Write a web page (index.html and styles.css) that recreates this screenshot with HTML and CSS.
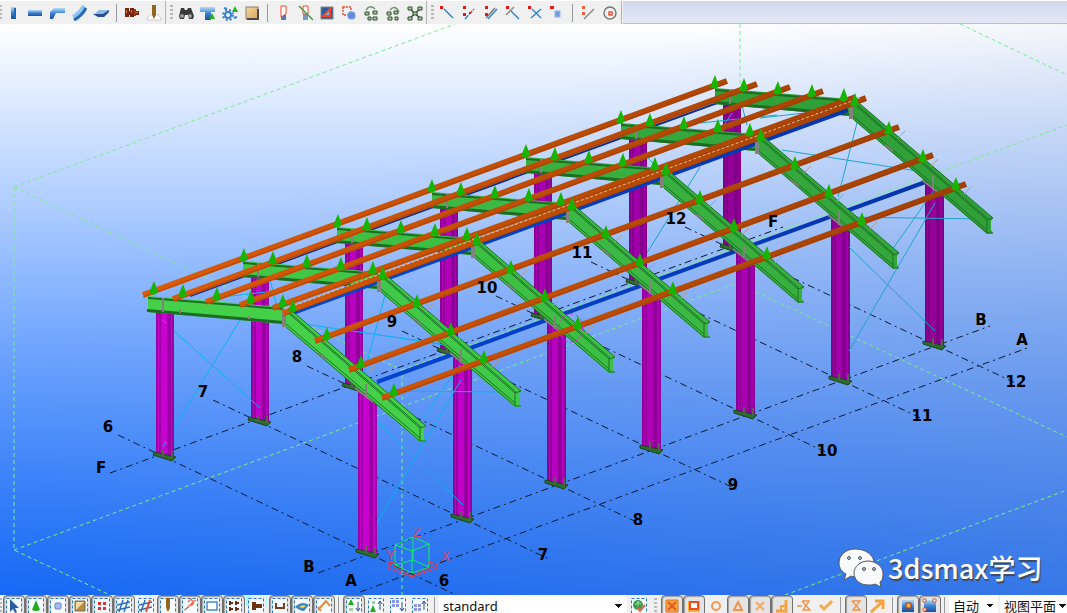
FILE: index.html
```html
<!DOCTYPE html>
<html lang="zh-CN">
<head>
    <meta charset="UTF-8">
    <meta name="viewport" content="width=device-width, initial-scale=1">
    <title>Model View</title>
    <link rel="stylesheet" href="styles.css">
</head>
<body>
    <!-- shared icon parts -->
    <svg class="defs" aria-hidden="true">
        <defs>
            <linearGradient id="blue" x1="0" y1="0" x2="0" y2="1">
                <stop offset="0" stop-color="#b4dcf8"/>
                <stop offset="0.5" stop-color="#3c82d2"/>
                <stop offset="1" stop-color="#1c4f9c"/>
            </linearGradient>
            <linearGradient id="gold" x1="0" y1="0" x2="1" y2="1">
                <stop offset="0" stop-color="#f4d898"/>
                <stop offset="1" stop-color="#d8a860"/>
            </linearGradient>
            <rect id="marquee" x="0.5" y="0.5" width="15" height="15" fill="#f6fbff" stroke="#2a78c0" stroke-dasharray="3 2"/>
        </defs>
    </svg>

    <header class="toolbar">
        <div class="group">
            <span class="handle"></span>
            <button type="button" class="tool" aria-label="Column"><svg viewBox="0 0 16 16"><path d="M6 2h5v12H6z" fill="url(#blue)"/><path d="M9 3h2v11H9z" fill="#1f66b8"/></svg></button>
            <button type="button" class="tool" aria-label="Beam"><svg viewBox="0 0 16 16"><path d="M1 5h14v6H1z" fill="url(#blue)"/></svg></button>
            <button type="button" class="tool" aria-label="Polybeam"><svg viewBox="0 0 16 16"><path d="M1 14V7l4-4h11v5H7l-3 6z" fill="url(#blue)"/></svg></button>
            <button type="button" class="tool" aria-label="Curved beam"><svg viewBox="0 0 16 16"><path d="M2 12Q8 9 13 1" fill="none" stroke="#8fc4ee" stroke-width="4"/><path d="M3 15Q11 11 15 3" fill="none" stroke="#2468b8" stroke-width="3"/></svg></button>
            <button type="button" class="tool" aria-label="Plate"><svg viewBox="0 0 16 16"><path d="M6 5h10l-5 5H0z" fill="#8fbae4"/><path d="M0 9h10l6-4v2l-5 5H5z" fill="#264c94"/></svg></button>
            <span class="sep"></span>
            <button type="button" class="tool" aria-label="Bolts"><svg viewBox="0 0 16 16"><path d="M1 3h4v9H1zM6 3h4v9H6zM4 6h11v4H4z" fill="#7c2410"/><path d="M10 4h2v7h-2z" fill="#9c3c14"/><path d="M2 5h1v3H2zM7 5h1v3H7zM12 7h2v1h-2z" fill="#d47840"/></svg></button>
            <button type="button" class="tool" aria-label="Weld"><svg viewBox="0 0 16 16"><path d="M1 15a7 6 0 0 1 14 0z" fill="#fff" stroke="#ccc"/><path d="M6 0h4v10l-2 4-2-4z" fill="#94661c"/></svg></button>
        </div>
        <div class="group">
            <span class="handle"></span>
            <button type="button" class="tool" aria-label="Find"><svg viewBox="0 0 16 16"><path d="M3 3h3l1 2h2l1-2h3l3 8-1 3h-4l-1-4H7l-1 4H2l-1-3z" fill="#3a3a3a"/><circle cx="4" cy="11" r="2" fill="#999"/><circle cx="12" cy="11" r="2" fill="#999"/></svg></button>
            <button type="button" class="tool" aria-label="Component"><svg viewBox="0 0 16 16"><path d="M0 2h15v5h-4v8H5V7H0z" fill="url(#blue)"/><path d="M12 8l3 6H9z" fill="#1fb41f"/></svg></button>
            <button type="button" class="tool" aria-label="Component settings"><svg viewBox="0 0 16 16"><circle cx="6" cy="10" r="3" fill="none" stroke="#3c82c8" stroke-width="2"/><circle cx="6" cy="10" r="5" fill="none" stroke="#3c82c8" stroke-width="2" stroke-dasharray="2 2"/><path d="M13 1l3 6h-6z" fill="#1fb41f"/><path d="M2 3l3 1M12 13l3-1" stroke="#3c82c8" stroke-width="2"/></svg></button>
            <button type="button" class="tool" aria-label="Macro"><svg viewBox="0 0 16 16"><rect x="2" y="2" width="12" height="12" fill="url(#gold)" stroke="#8a8070"/><path d="M3 14h11V4" fill="none" stroke="#4a4a4a" stroke-width="2"/></svg></button>
            <span class="sep"></span>
            <button type="button" class="tool" aria-label="Fit part end"><svg viewBox="0 0 16 16"><path d="M6 9h5v6H6z" fill="#4c7cc0"/><path d="M6 1h5v8l-5 3z" fill="#fff" stroke="#f04828"/></svg></button>
            <button type="button" class="tool" aria-label="Cut part with line"><svg viewBox="0 0 16 16"><path d="M6 8h5v7H6z" fill="#7898c8"/><path d="M6 1h5v8H6z" fill="#fff" stroke="#f04828"/><path d="M2 1l14 14" stroke="#3c9c3c" stroke-width="1.4"/></svg></button>
            <button type="button" class="tool" aria-label="Cut part with polygon"><svg viewBox="0 0 16 16"><rect x="2" y="2" width="12" height="12" fill="#2a5c9c" stroke="#888"/><path d="M4 11l7-7v7z" fill="#88aee0" stroke="#f04828" stroke-width="2"/></svg></button>
            <button type="button" class="tool" aria-label="Cut part with part"><svg viewBox="0 0 16 16"><rect x="2" y="2" width="8" height="8" fill="none" stroke="#f04828" stroke-width="1.4" stroke-dasharray="2 1"/><rect x="7" y="7" width="7" height="7" rx="2" fill="#5c8cd8" stroke="#8ca8e8"/></svg></button>
            <button type="button" class="tool" aria-label="Auto connection"><svg viewBox="0 0 16 16"><path d="M3 5q4-6 9-1" fill="none" stroke="#6c946c" stroke-width="1.4"/><path d="M2 7h4v3H2zM10 6h4v3h-4zM5 12h3v3H5zM10 12h4v3h-4z" fill="#a8cca0" stroke="#344c34"/></svg></button>
            <button type="button" class="tool" aria-label="Auto default"><svg viewBox="0 0 16 16"><path d="M5 5q5-6 9 2" fill="none" stroke="#6c946c" stroke-width="1.4"/><path d="M2 7h4v3H2zM9 6h4v3H9zM3 12h4v3H3zM10 12h3v3h-3z" fill="#a8cca0" stroke="#344c34"/></svg></button>
            <button type="button" class="tool" aria-label="Explode"><svg viewBox="0 0 16 16"><path d="M3 4l10 9M13 4L3 13" stroke="#344c34" stroke-width="1.4"/><path d="M1 2h4v3H1zM11 2h4v3h-4zM1 12h4v3H1zM11 12h4v3h-4zM6 7h4v3H6z" fill="#a8cca0" stroke="#344c34"/></svg></button>
        </div>
        <div class="group">
            <span class="handle"></span>
            <button type="button" class="tool points" aria-label="Point on line"><svg viewBox="0 0 16 16"><path d="M5 4l9 9" stroke="#2c84d0"/><path d="M1 1h3v3H1z" fill="#e41818"/></svg></button>
            <button type="button" class="tool points" aria-label="Points along two points"><svg viewBox="0 0 16 16"><path d="M4 14l9-10" stroke="#2c84d0" stroke-dasharray="5 1"/><path d="M2 1h3v3H2zM2 8h3v3H2zM8 7h2v2H8z" fill="#e41818"/></svg></button>
            <button type="button" class="tool points" aria-label="Parallel points"><svg viewBox="0 0 16 16"><path d="M3 13L12 3" stroke="#777"/><path d="M5 14l9-10" stroke="#2c84d0"/><path d="M2 1h3v3H2zM2 8h3v3H2z" fill="#e41818"/></svg></button>
            <button type="button" class="tool points" aria-label="Intersection point"><svg viewBox="0 0 16 16"><path d="M6 6l8 8" stroke="#2c84d0"/><path d="M1 10L9 2" stroke="#888"/><path d="M1 1h3v3H1z" fill="#e41818"/></svg></button>
            <button type="button" class="tool points" aria-label="Line crossing"><svg viewBox="0 0 16 16"><path d="M5 4l9 9M14 4L4 13" stroke="#2c84d0"/><path d="M1 1h3v3H1z" fill="#e41818"/></svg></button>
            <button type="button" class="tool" aria-label="Point on part"><svg viewBox="0 0 16 16"><rect x="6" y="6" width="5" height="6" fill="#6c9ce4" stroke="#9cb4ec"/><path d="M1 1h4v3H1z" fill="#e41818"/></svg></button>
            <span class="sep"></span>
            <button type="button" class="tool points" aria-label="Construction line"><svg viewBox="0 0 16 16"><path d="M4 14L14 4" stroke="#888"/><path d="M2 1h3v3H2zM2 7h3v3H2z" fill="#f45c3c"/></svg></button>
            <button type="button" class="tool points" aria-label="Construction circle"><svg viewBox="0 0 16 16"><circle cx="8" cy="8" r="6" fill="none" stroke="#777"/><rect x="7" y="7" width="3" height="3" fill="none" stroke="#f04828"/></svg></button>
        </div>
        <div class="rest"></div>
    </header>

    <main class="view">
        <svg class="scene" viewBox="0 24 1067 571" preserveAspectRatio="xMidYMid slice" role="img" aria-label="Steel frame model">
            <defs>
                <linearGradient id="sky" x1="0" y1="0" x2="0" y2="1">
                    <stop offset="0" stop-color="#ffffff"/>
                    <stop offset="1" stop-color="#0060ff"/>
                </linearGradient>
                <linearGradient id="haze" x1="0.4" y1="0.2" x2="1" y2="1">
                    <stop offset="0" stop-color="#8898c0" stop-opacity="0"/>
                    <stop offset="1" stop-color="#8898c0" stop-opacity="0.4"/>
                </linearGradient>
                <linearGradient id="rust" gradientUnits="userSpaceOnUse" x1="145" y1="300" x2="960" y2="120">
                    <stop offset="0" stop-color="#dc5a04"/>
                    <stop offset="1" stop-color="#a04004"/>
                </linearGradient>
                <linearGradient id="tube" gradientUnits="userSpaceOnUse" x1="190" y1="300" x2="930" y2="100">
                    <stop offset="0" stop-color="#0448dc"/>
                    <stop offset="1" stop-color="#0434a8"/>
                </linearGradient>

                <g id="colF">
                    <path class="steel" d="M156 302h18v156l-8 1-10-3z"/>
                    <path class="edge" d="M157 302v154M160 302v155M168 302v156M170 302v156M173 302v156"/>
                    <path class="base" d="M154 452l22 5-4 4-19-6z"/>
                    <path class="bolt" d="M163 450v7M172 451v7"/>
                </g>
                <g id="colB">
                    <path class="steel" d="M358 384l19 12v157l-8 2-11-4z"/>
                    <path class="edge" d="M359 386v164M362 388v163M370 392v161M372 393v160M376 395v157"/>
                    <path class="base" d="M356 549l23 5-4 4-19-6z"/>
                    <path class="bolt" d="M366 546v7M375 547v7"/>
                </g>
                <g id="rafterF">
                    <path class="green" d="M148 296l135 11v17l-135-12z"/>
                    <path class="flange" d="M148 297l135 11v2l-135-11zM147 309l136 12v3l-136-12z"/>
                    <path class="plate" d="M163 298v14M180 309v4M249 316v3"/>
                </g>
                <g id="rafterB">
                    <path class="green" d="M286 311h6l134 115-2 3v9l2 3-6 1-134-115z"/>
                    <path class="line" d="M286 311l134 117v13M292 311l134 115-6 2M289 312l132 115M286 324l134 114M286 327l134 114 6 0"/>
                    <path class="plate" d="M283 309v18M285 310v17M318 353l8 6M366 384v14M355 388l18 14"/>
                </g>
                <path id="cone" class="cone" d="M0-7l4 11-4 3-5-2z"/>
                <g id="conesF">
                    <use href="#cone" x="149" y="290"/>
                    <use href="#cone" x="178" y="293"/>
                    <use href="#cone" x="212" y="296"/>
                    <use href="#cone" x="246" y="299"/>
                    <use href="#cone" x="278" y="303"/>
                </g>
                <g id="conesB">
                    <use href="#cone" x="288" y="308"/>
                    <use href="#cone" x="322" y="336"/>
                    <use href="#cone" x="356" y="364"/>
                    <use href="#cone" x="389" y="392"/>
                    <path class="clip" d="M331 346l7-7M364 374l7-7M397 402l7-7"/>
                </g>
            </defs>

            <rect class="sky" x="0" y="24" width="1067" height="571"/>
            <rect class="haze" x="0" y="24" width="1067" height="571"/>

            <!-- work area box -->
            <path class="workarea" d="M14 187L455 24M14 187V550L110 595M14 187L402 370V595M402 370L1067 125M14 550L737 283L1067 437M740 24V283M960 24L1067 75M785 595L1067 490"/>

            <!-- grid lines -->
            <path class="grid" d="M110 473L783 227M318 573L990 326M360 592L1030 347"/>
            <path class="grid" d="M118 435L456 595M213 400L551 560M307 366L645 526M402 331L740 491M496 296L834 456M591 262L929 422M685 227L1024 387"/>

            <!-- columns, far to near -->
            <g class="f12"><use href="#colF" x="567" y="-208"/><use href="#colB" x="567" y="-208"/></g>
            <g class="f11"><use href="#colF" x="473" y="-173"/><use href="#colB" x="473" y="-173"/></g>
            <g class="f10"><use href="#colF" x="378" y="-139"/><use href="#colB" x="378" y="-139"/></g>
            <g class="f9"><use href="#colF" x="284" y="-104"/><use href="#colB" x="284" y="-104"/></g>
            <g class="f8"><use href="#colF" x="189" y="-69"/><use href="#colB" x="189" y="-69"/></g>
            <g class="f7"><use href="#colF" x="95" y="-35"/><use href="#colB" x="95" y="-35"/></g>
            <g class="f6"><use href="#colF"/><use href="#colB"/></g>

            <!-- bracing -->
            <path class="brace" d="M174 331L260 408M240 320L174 428M163 320l3 3M163 447l3-6M377 421L463 505M461 380L377 523M460 365L423 418M370 391L515 392M297 323L448 345M387 288L363 377M223 297L283 290M268 272L277 307M400 338L457 347"/>
            <path class="brace far" d="M782 150L930 173M859 115L838 197M838 217L985 219M940 182L887 257M935 203L849 351M849 247L935 331M700 123L777 115M700 167L647 253M740 98L747 125M648 158l12 12M732 113l-8 12M760 118L840 109"/>

            <path class="tube thin" d="M190 296L728 99"/>

            <g class="f12"><use href="#rafterF" x="567" y="-208"/></g>
            <g class="f11"><use href="#rafterF" x="473" y="-173"/></g>
            <g class="f10"><use href="#rafterF" x="378" y="-139"/></g>
            <g class="f9"><use href="#rafterF" x="284" y="-104"/></g>
            <g class="f8"><use href="#rafterF" x="189" y="-69"/></g>
            <g class="f7"><use href="#rafterF" x="95" y="-35"/></g>
            <g class="f6"><use href="#rafterF"/></g>

            <path class="tube" d="M290 314L848 110M377 382L931 180"/>

            <g class="f12"><use href="#rafterB" x="567" y="-208"/></g>
            <g class="f11"><use href="#rafterB" x="473" y="-173"/></g>
            <g class="f10"><use href="#rafterB" x="378" y="-139"/></g>
            <g class="f9"><use href="#rafterB" x="284" y="-104"/></g>
            <g class="f8"><use href="#rafterB" x="189" y="-69"/></g>
            <g class="f7"><use href="#rafterB" x="95" y="-35"/></g>
            <g class="f6"><use href="#rafterB"/></g>

            <!-- purlins -->
            <path class="purlin" d="M143 295L727 81M173 299L757 84M206 302L790 87M240 305L823 91M273 308L856 97M283 313L866 98M315 341L899 127M349 370L933 155M382 398L966 184"/>
            <path class="groove" d="M143 297L727 83M173 301L757 86M206 304L790 89M240 307L823 93M273 310L856 99M283 316L866 101M315 343L899 129M349 372L933 157M382 400L966 186"/>
            <path class="ridge" d="M285 309L860 98"/>

            <use href="#conesF" x="566" y="-208"/><use href="#conesB" x="567" y="-208"/>
            <use href="#conesF" x="472" y="-173"/><use href="#conesB" x="473" y="-173"/>
            <use href="#conesF" x="377" y="-139"/><use href="#conesB" x="378" y="-139"/>
            <use href="#conesF" x="283" y="-104"/><use href="#conesB" x="284" y="-104"/>
            <use href="#conesF" x="189" y="-69"/><use href="#conesB" x="189" y="-69"/>
            <use href="#conesF" x="95" y="-35"/><use href="#conesB" x="95" y="-35"/>
            <use href="#conesF" x="5" y="-2"/><use href="#conesB" x="5" y="-2"/>

            <ellipse class="pick" cx="571" cy="328" rx="12" ry="14"/>

            <!-- grid labels -->
            <g class="labels">
                <text x="108" y="432">6</text>
                <text x="203" y="397">7</text>
                <text x="297" y="362">8</text>
                <text x="392" y="327">9</text>
                <text x="487" y="293">10</text>
                <text x="582" y="258">11</text>
                <text x="676" y="224">12</text>
                <text x="444" y="586">6</text>
                <text x="543" y="560">7</text>
                <text x="638" y="525">8</text>
                <text x="733" y="490">9</text>
                <text x="827" y="456">10</text>
                <text x="922" y="421">11</text>
                <text x="1016" y="387">12</text>
                <text x="101" y="473">F</text>
                <text x="773" y="227">F</text>
                <text x="309" y="572">B</text>
                <text x="981" y="325">B</text>
                <text x="351" y="586">A</text>
                <text x="1022" y="345">A</text>
            </g>

            <!-- coordinate cube -->
            <path class="cube" d="M395 545L413 537L429 544L412 551zM395 545V565L413 560L429 567L412 573L395 565M412 551V573M429 544V567M413 537V560"/>
            <path class="axes" d="M388 563L412 576L437 564M388 563v5l24 9 25-9v-5M388 563l7-1M437 564l-9-2"/>
            <g class="axis-labels">
                <text x="417" y="537">Z</text>
                <text x="391" y="560">Y</text>
                <text x="446" y="561">X</text>
            </g>

            <!-- channel mark -->
            <g class="chat">
                <path d="M855 549c-9 0-16 6-16 14 0 5 3 9 7 11l-2 6 7-4c2 1 5 1 8 1 9 0 15-6 15-14s-8-14-19-14z"/>
                <path d="M868 561c-8 0-14 6-14 12 0 7 6 12 14 12 3 0 5 0 7-1l6 3-1-5c3-2 3-5 3-9 0-6-7-12-15-12z"/>
                <g class="eyes">
                    <circle cx="849" cy="558" r="1.5"/><circle cx="860" cy="558" r="1.5"/>
                    <circle cx="864" cy="569" r="1.5"/><circle cx="874" cy="569" r="1.5"/>
                </g>
            </g>
            <text class="channel" x="888" y="579">3dsmax学习</text>
        </svg>
    </main>

    <footer class="statusbar">
        <div class="group">
            <span class="handle small"></span>
            <button type="button" class="tool on" aria-label="Select all"><svg viewBox="0 0 16 16"><use href="#marquee"/><path d="M4 1l9 9H9l2 4-2 1-2-4-3 3z" fill="#2c5ca4"/></svg></button>
            <button type="button" class="tool on" aria-label="Select components"><svg viewBox="0 0 16 16"><use href="#marquee"/><path d="M8 2l4 10q-4 2-8 0z" fill="#1fac1f"/></svg></button>
            <button type="button" class="tool on" aria-label="Select parts"><svg viewBox="0 0 16 16"><use href="#marquee"/><rect x="5" y="5" width="6" height="6" rx="1" fill="#a4bcf0" stroke="#6484cc"/></svg></button>
            <button type="button" class="tool on" aria-label="Select surfaces"><svg viewBox="0 0 16 16"><use href="#marquee"/><path d="M3 3h10v10H3z" fill="#b88c3c" stroke="#786c50"/><path d="M4 12V4h8z" fill="#f4dca0"/></svg></button>
            <button type="button" class="tool on" aria-label="Select points"><svg viewBox="0 0 16 16"><use href="#marquee"/><path d="M4 4h3v3H4zM9 4h3v3H9zM4 9h3v3H4zM9 9h3v3H9z" fill="#e43030"/></svg></button>
            <button type="button" class="tool on" aria-label="Select grids"><svg viewBox="0 0 16 16"><use href="#marquee"/><path d="M3 14L7 2M8 14l4-12M1 7l13-3M1 12l13-3" stroke="#2c6cb4" stroke-width="1.4"/></svg></button>
            <button type="button" class="tool" aria-label="Select grid lines"><svg viewBox="0 0 16 16"><use href="#marquee"/><path d="M3 14L7 2M1 7l13-3M1 12l13-3" stroke="#2c6cb4" stroke-width="1.4"/><path d="M8 14l4-12" stroke="#f04828" stroke-width="2"/></svg></button>
            <button type="button" class="tool on" aria-label="Select welds"><svg viewBox="0 0 16 16"><use href="#marquee"/><path d="M6 0h4v10l-2 4-2-4z" fill="#94661c"/></svg></button>
            <button type="button" class="tool on" aria-label="Select cuts"><svg viewBox="0 0 16 16"><use href="#marquee"/><path d="M3 12L12 3M6 4l3-3 2 3 3-2M9 8l3-3" fill="none" stroke="#f0704c" stroke-width="1.4"/><path d="M2 12l5-3" stroke="#888"/></svg></button>
            <button type="button" class="tool on" aria-label="Select views"><svg viewBox="0 0 16 16"><use href="#marquee"/><rect x="3" y="4" width="10" height="8" fill="#fff" stroke="#3c82c8" stroke-width="1.4"/></svg></button>
            <button type="button" class="tool on" aria-label="Select bolt groups"><svg viewBox="0 0 16 16"><use href="#marquee"/><path d="M3 3h2v4H3zM5 4h2v2H5zM9 3h2v4H9zM11 4h2v2h-2zM3 9h2v4H3zM5 10h2v2H5zM9 9h2v4H9zM11 10h2v2h-2z" fill="#6c2c14"/></svg></button>
            <button type="button" class="tool glow" aria-label="Select single bolts"><svg viewBox="0 0 16 16"><use href="#marquee"/><path d="M4 4h4v8H4zM8 6h6v4H8z" fill="#6c3410"/></svg></button>
            <span class="gap"></span>
            <button type="button" class="tool on" aria-label="Select rebars"><svg viewBox="0 0 16 16"><use href="#marquee"/><path d="M4 5v5h8V5" fill="none" stroke="#7c3c1c" stroke-width="2"/></svg></button>
            <button type="button" class="tool on" aria-label="Select surface treatment"><svg viewBox="0 0 16 16"><use href="#marquee"/><path d="M1 9q7-7 14-2l-5 6q-4 0-9-4z" fill="#3c84c4"/><path d="M5 9q4-3 7-1l-3 2z" fill="#f0dc50"/></svg></button>
            <button type="button" class="tool on" aria-label="Select distances"><svg viewBox="0 0 16 16"><use href="#marquee"/><path d="M2 12L10 3l4 5M2 9l3 4" fill="none" stroke="#e88a34" stroke-width="2"/></svg></button>
            <span class="sep"></span>
            <button type="button" class="tool on" aria-label="Components down"><svg viewBox="0 0 16 16"><use href="#marquee"/><path d="M5 1l3 6H2z" fill="#1fac1f"/><path d="M3 10h4v3H3z" fill="#a8cca0"/><path d="M12 4v9M10 10l2 3 2-3" fill="none" stroke="#304c84"/></svg></button>
            <button type="button" class="tool" aria-label="Components up"><svg viewBox="0 0 16 16"><use href="#marquee"/><path d="M5 7l3 7H2z" fill="#1fac1f"/><path d="M4 3h3v3H4z" fill="#a8cca0"/><path d="M12 3v9M10 6l2-3 2 3" fill="none" stroke="#304c84"/></svg></button>
            <button type="button" class="tool" aria-label="Assemblies down"><svg viewBox="0 0 16 16"><use href="#marquee"/><path d="M2 2h3v3H2zM6 2h3v3H6zM2 6h3v3H2zM6 6h3v3H6z" fill="#8c98e4"/><path d="M12 4v9M10 10l2 3 2-3" fill="none" stroke="#304c84"/></svg></button>
            <button type="button" class="tool" aria-label="Assemblies up"><svg viewBox="0 0 16 16"><use href="#marquee"/><path d="M2 6h3v3H2zM6 6h3v3H6zM2 10h3v3H2zM6 10h3v3H6z" fill="#8c98e4"/><path d="M12 3v9M10 6l2-3 2 3" fill="none" stroke="#304c84"/></svg></button>
            <span class="sep"></span>
        </div>
        <select class="filter" aria-label="Selection filter"><option>standard</option></select>
        <div class="group">
            <button type="button" class="tool" aria-label="Selection filter settings"><svg viewBox="0 0 16 16"><use href="#marquee"/><circle cx="7" cy="7" r="5" fill="#3c9c4c"/><path d="M4 7q3-4 6-1M7 3v5" fill="none" stroke="#b4e0b4"/><path d="M6 9l3 4 5-6" fill="none" stroke="#f0604c" stroke-width="2"/></svg></button>
            <span class="handle"></span>
            <button type="button" class="tool on" aria-label="Snap to reference"><svg viewBox="0 0 16 16"><path d="M2 2h12v12H2z" fill="#fca83c" stroke="#d87418"/><path d="M4 4l8 8M12 4l-8 8" stroke="#e4542c" stroke-width="2"/></svg></button>
            <button type="button" class="tool on" aria-label="Snap to geometry"><svg viewBox="0 0 16 16"><path d="M2 3h12v11H2z" fill="#fcac3c"/><path d="M4 4h8v7H4z" fill="#fff" stroke="#f04c20" stroke-width="2"/></svg></button>
            <button type="button" class="tool" aria-label="Snap to centre"><svg viewBox="0 0 16 16"><circle cx="8" cy="8" r="4" fill="none" stroke="#f09850" stroke-width="2"/></svg></button>
            <button type="button" class="tool on" aria-label="Snap to midpoint"><svg viewBox="0 0 16 16"><path d="M8 4l4 8H4z" fill="none" stroke="#f0944c" stroke-width="2"/></svg></button>
            <button type="button" class="tool on" aria-label="Snap to intersection"><svg viewBox="0 0 16 16"><path d="M4 4l8 8M12 4l-8 8" stroke="#f4ac64" stroke-width="2"/></svg></button>
            <button type="button" class="tool on" aria-label="Snap to perpendicular"><svg viewBox="0 0 16 16"><path d="M12 2v11H2" fill="none" stroke="#f4a43c" stroke-width="3"/><path d="M7 12V8h5" fill="none" stroke="#f4a43c" stroke-width="2"/></svg></button>
            <button type="button" class="tool" aria-label="Snap to extension"><svg viewBox="0 0 16 16"><path d="M6 3h7l-6 9h7L6 3M1 8h5" fill="none" stroke="#f0944c" stroke-width="1.4"/></svg></button>
            <button type="button" class="tool" aria-label="Snap to any position"><svg viewBox="0 0 16 16"><path d="M2 7l4 4 8-8" fill="none" stroke="#f4ac50" stroke-width="3"/></svg></button>
            <span class="sep"></span>
            <button type="button" class="tool on" aria-label="Snap to nearest point"><svg viewBox="0 0 16 16"><path d="M4 3h8l-7 9h7L4 3" fill="none" stroke="#f0944c" stroke-width="1.4"/></svg></button>
            <button type="button" class="tool" aria-label="Snap to lines"><svg viewBox="0 0 16 16"><path d="M1 14L12 4M5 3h8v8" fill="none" stroke="#f4a43c" stroke-width="3"/></svg></button>
            <span class="sep"></span>
            <button type="button" class="tool on" aria-label="Snap depth"><svg viewBox="0 0 16 16"><path d="M2 2h12v12H2z" fill="url(#blue)"/><path d="M6 5h5v5H6z" fill="#f8b43c" stroke="#a43018"/></svg></button>
            <button type="button" class="tool on" aria-label="Snap plane"><svg viewBox="0 0 16 16"><path d="M2 2h12v12H2z" fill="url(#blue)"/><path d="M1 1h3v3H1zM11 1h3v3h-3zM1 10h3v3H1z" fill="#fff" stroke="#e45028"/></svg></button>
            <span class="sep"></span>
        </div>
        <select class="mode" aria-label="Snap mode"><option>自动</option></select>
        <select class="plane" aria-label="Work plane"><option>视图平面</option></select>
    </footer>
</body>
</html>
```
FILE: styles.css
```css
* {
    box-sizing: border-box;
}

body {
    margin: 0;
    height: 100vh;
    display: flex;
    flex-direction: column;
    overflow: hidden;
    background-color: #f0f0f0;
    font-family: "Noto Sans", "Noto Sans CJK SC", sans-serif;
    font-size: 13px;
    color: #111111;
}

.defs {
    position: absolute;
    width: 0;
    height: 0;
}

/* toolbars */
.toolbar {
    display: flex;
    height: 24px;
    flex: none;
    border-top: 1px solid #ffffff;
}

.group {
    display: flex;
    flex: none;
    align-items: center;
}

.toolbar .group {
    border-right: 1px solid #b4b4b4;
}

.toolbar .group + .group {
    padding-left: 2px;
}

.rest {
    flex: 1;
    margin-left: 1px;
    background: linear-gradient(#d0d8ec, #e4e8f6);
    border-bottom: 1px solid #b8bccc;
}

.handle {
    width: 3px;
    height: 16px;
    margin: 0 2px;
    background: repeating-linear-gradient(#b8b8b8 0 2px, transparent 2px 4px);
}

.toolbar .group:first-child .handle {
    width: 2px;
    margin: 0;
}

.sep {
    width: 1px;
    height: 18px;
    margin: 0 4px;
    background-color: #999999;
}

.gap {
    width: 2px;
}

.tool {
    width: 22px;
    height: 22px;
    padding: 0;
    border: 1px solid transparent;
    border-radius: 4px;
    background: none;
    display: flex;
    align-items: center;
    justify-content: center;
    flex: none;
}

.tool svg {
    width: 16px;
    height: 16px;
    display: block;
}

.points svg {
    stroke-width: 1.4;
}

.on {
    border-color: #707070;
    background-color: #e4e4e4;
    box-shadow: inset 1px 1px 1px #a0a0a0;
}

.glow {
    background: radial-gradient(circle at 2px 4px, #a8f4ff 0 4px, transparent 7px);
}

/* model view */
.view {
    flex: 1;
    min-height: 0;
}

.scene {
    display: block;
    width: 100%;
    height: 100%;
}

.scene path,
.scene ellipse {
    fill: none;
}

.sky {
    fill: url(#sky);
}

.haze {
    fill: url(#haze);
}

.workarea {
    stroke: #7cec8c;
    stroke-dasharray: 4 3;
}

.grid {
    stroke: #0c1830;
    stroke-dasharray: 7 4 2 4;
}

/* frames fade with distance */
.f6 { --steel: #c800d0; --green: #44d048; }
.f7 { --steel: #c000c8; --green: #40c848; }
.f8 { --steel: #b800c0; --green: #3cc044; }
.f9 { --steel: #b000b8; --green: #3cb844; }
.f10 { --steel: #a800b0; --green: #38b040; }
.f11 { --steel: #a000a8; --green: #34a83c; }
.f12 { --steel: #940098; --green: #30a038; }

.scene .steel {
    fill: var(--steel);
}

.scene .edge {
    stroke: #6c0078;
}

.scene .base {
    fill: #2c6c2c;
    stroke: #1c4420;
}

.scene .bolt {
    stroke: #5c5c54;
    stroke-width: 2;
}

.scene .green {
    fill: var(--green);
}

.scene .flange {
    fill: #1c6c24;
}

.scene .line {
    stroke: #1c7024;
}

.scene .plate {
    stroke: #84807c;
    stroke-width: 2;
}

.scene .cone {
    fill: #18b404;
}

.clip {
    stroke: #a8a094;
}

.brace {
    stroke: #08b4f0;
}

.far {
    stroke: #20a4cc;
}

.tube {
    stroke: url(#tube);
    stroke-width: 4;
}

.thin {
    stroke: #0c2c98;
    stroke-width: 2;
}

.purlin {
    stroke: url(#rust);
    stroke-width: 6;
}

.groove {
    stroke: #8c3804;
    opacity: 0.5;
}

.ridge {
    stroke: #e0c0a0;
    stroke-dasharray: 3 2;
}

.pick {
    stroke: #f020e0;
    stroke-dasharray: 3 3;
}

.labels {
    font: bold 15px "DejaVu Sans", sans-serif;
    text-anchor: middle;
    fill: #000000;
}

.cube {
    stroke: #10f060;
}

.axes {
    stroke: #e83c50;
}

.axis-labels {
    font: 14px "Liberation Sans", sans-serif;
    text-anchor: middle;
    fill: #d04878;
}

.scene .chat path {
    fill: #fafafa;
    stroke: #505868;
}

.eyes {
    fill: #b8c0c8;
    stroke: #505868;
}

.channel {
    font: 500 27px "Noto Sans CJK SC", sans-serif;
    fill: #ffffff;
    text-shadow: 1px 2px 1px #404858;
}

/* status bar */
.statusbar {
    display: flex;
    flex: none;
    align-items: flex-start;
    height: 18px;
    overflow: hidden;
    background-color: #f0f0f0;
}

.statusbar .sep {
    margin: 0 4px 0 3px;
}

.statusbar .handle {
    margin: 0 4px;
}

.statusbar .small {
    width: 2px;
    margin: 0 1px 0 0;
}

.statusbar select {
    height: 22px;
    border: 0;
    padding: 0 4px;
    appearance: none;
    color: inherit;
    font: inherit;
    background-color: #ffffff;
    background-image: linear-gradient(to bottom left, #111111 50%, transparent 50%), linear-gradient(to bottom right, #111111 50%, transparent 50%);
    background-position: right 8px top 9px, right 4px top 9px;
    background-size: 4px 4px;
    background-repeat: no-repeat;
}

.filter {
    flex: 1;
    min-width: 90px;
    margin-right: 1px;
}

.mode {
    width: 49px;
    flex: none;
    margin-right: 2px;
}

.statusbar .plane {
    width: 67px;
    flex: none;
    background-position: right 4px top 9px, right 0 top 9px;
}
```
